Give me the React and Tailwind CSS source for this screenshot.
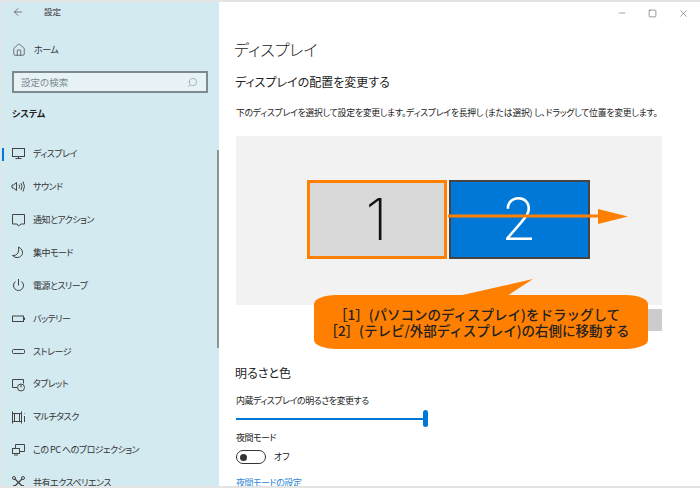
import { ArrowLeft, Home, Search, Minus, Square, X } from "lucide-react";

// small Windows style glyphs, the lucide ones are too far off
const glyph = { width: 15, height: 15, viewBox: "0 0 15 15", fill: "none", stroke: "currentColor", strokeWidth: 1 };

const DisplayIcon = () => (
  <svg {...glyph}><rect x="1.5" y="2.5" width="12" height="8" /><path d="M7.5 10.5v2M4.5 12.5h6" /></svg>
);
const SoundIcon = () => (
  <svg {...glyph}><path d="M1 6v3h1.5L5.5 11.5v-8L2.5 6zM8 5.5q1.2 2 0 4M10 4q2 3.5 0 7M12 2.5q3 5 0 10" /></svg>
);
const ActionIcon = () => (
  <svg {...glyph}><path d="M1.5 2.5h12v9.5h-3.5l-2.5 2-1.5-2h-4.5z" /></svg>
);
const MoonIcon = () => (
  <svg {...glyph}><path d="M7.5 2q5 2.500 3.800 7.500q-2.300 4-6.300 3q-2-.5-3.500-2q4 .5 5.500-2.500q1.200-3 .5-6z" /></svg>
);
const PowerIcon = () => (
  <svg {...glyph}><path d="M7.5 1v6.500M4.500 3.500a5 5 0 1 0 6 0" /></svg>
);
const BatteryIcon = () => (
  <svg {...glyph}><rect x="1.5" y="5" width="11" height="5.500" /><path d="M13.5 6.500v2.500" /></svg>
);
const StorageIcon = () => (
  <svg {...glyph}><rect x="1.5" y="5.500" width="12" height="4" rx="1" /></svg>
);
const TabletIcon = () => (
  <svg {...glyph}><path d="M6 10.500h-4.500v-8h11v4" /><circle cx="10" cy="10.500" r="3.500" /><path d="M10 7.500v3" /></svg>
);
const MultitaskIcon = () => (
  <svg {...glyph}><path d="M1.5 1.500v12M10.500 1.500v12M1.500 3.500h9M1.500 11.500h9M3.500 3.500v8M8.500 3.500v8M13.500 3v.5M13.500 6v6" /></svg>
);
const ProjectIcon = () => (
  <svg {...glyph}><path d="M4.500 6v-3.500h9v7h-5" /><rect x="1.5" y="6.500" width="7" height="5" /><path d="M3 13h4" /></svg>
);
const ShareIcon = () => (
  <svg {...glyph}><path d="M4 4l7 7M11 4l-7 7" strokeWidth="1.300" /><circle cx="3" cy="3" r="1.500" /><circle cx="12" cy="3" r="1.500" /><circle cx="3" cy="12" r="1.500" /><circle cx="12" cy="12" r="1.500" /></svg>
);

const NAV = [
  { label: "ディスプレイ", Icon: DisplayIcon, active: true },
  { label: "サウンド", Icon: SoundIcon },
  { label: "通知とアクション", Icon: ActionIcon },
  { label: "集中モード", Icon: MoonIcon },
  { label: "電源とスリープ", Icon: PowerIcon },
  { label: "バッテリー", Icon: BatteryIcon },
  { label: "ストレージ", Icon: StorageIcon },
  { label: "タブレット", Icon: TabletIcon },
  { label: "マルチタスク", Icon: MultitaskIcon },
  { label: "この PC へのプロジェクション", Icon: ProjectIcon },
  { label: "共有エクスペリエンス", Icon: ShareIcon },
];

function Sidebar() {
  return (
    <div className="relative flex w-[218px] shrink-0 flex-col overflow-hidden bg-[#d4eaf1] text-[#333]">
      <div className="flex h-[19px] shrink-0 items-center pl-[11px]">
        <ArrowLeft className="h-[12px] w-[12px]" strokeWidth={1.2} />
        <span className="ml-[20px] text-[8.5px]">設定</span>
      </div>
      <div className="mt-[18px] flex h-[22px] shrink-0 items-center pl-[11px]">
        <Home className="h-[14px] w-[14px]" strokeWidth={1.1} />
        <span className="ml-[8px] text-[9px] tracking-[-0.5px]">ホーム</span>
      </div>
      <div className="mx-[11px] mt-[10px] flex h-[22px] shrink-0 items-center justify-between border-2 border-[#7d8a8e] bg-[#e6f2f6] pr-[8px] pl-[7px] text-[9.5px] text-[#7e8b90]">
        <span>設定の検索</span>
        <Search className="h-[11px] w-[11px] -scale-x-100" strokeWidth={1.2} />
      </div>
      <div className="mt-[13px] shrink-0 pl-[11px] text-[9px] leading-[16px] font-bold text-[#222]">システム</div>
      <div className="mt-[15.5px] flex shrink-0 flex-col">
        {NAV.map(({ label, Icon, active }) => (
          <div key={label} className="relative flex h-[32.9px] shrink-0 items-center pl-[10px]">
            {active && <span className="absolute top-[10px] left-[1px] h-[13px] w-[2px] bg-[#0078d7]" />}
            <span className="text-[#444]"><Icon /></span>
            <span className="ml-[7px] text-[9px] tracking-[-0.5px] whitespace-nowrap">{label}</span>
          </div>
        ))}
      </div>
      <div className="absolute top-[148px] right-0 h-[198px] w-[2px] bg-[#8a9598]" />
    </div>
  );
}

function Callout() {
  return (
    <>
      <svg className="absolute top-0 left-0" width="700" height="488">
        <rect x="447" y="214.500" width="152" height="3" fill="#ff7f00" />
        <polygon points="597,209 627,216.500 597,224" fill="#ff7f00" />
        <polygon points="457,296 532,279 506,296" fill="#ff7f00" />
      </svg>
      <div className="absolute top-[295px] left-[313px] flex h-[54px] w-[334px] flex-col items-center justify-center rounded-[22px/9px] bg-[#ff7f00] pr-[8px] text-[13.5px] leading-[16px] font-medium whitespace-nowrap text-[#222] [font-feature-settings:normal]">
        <div>［1］(パソコンのディスプレイ)をドラッグして</div>
        <div>［2］(テレビ/外部ディスプレイ)の右側に移動する</div>
      </div>
    </>
  );
}

export default function App() {
  return (
    <div className="relative flex h-[488px] w-[700px] overflow-hidden border-t-2 border-b-2 border-l border-[#e4e4e4] bg-white font-['Noto_Sans_CJK_JP','Noto_Sans',sans-serif] [font-feature-settings:'palt']">
      <Sidebar />
      <div className="w-[481px] min-w-0 pl-[16px] text-[#222]">
        <div className="flex h-[22px] items-center justify-end gap-[21px] pr-[11px] text-[#444]">
          <Minus className="h-[10px] w-[10px]" strokeWidth={1.2} />
          <Square className="h-[9px] w-[9px]" strokeWidth={1.4} />
          <X className="h-[11px] w-[11px]" strokeWidth={1.1} />
        </div>
        <h1 className="mt-[12px] -ml-[1px] text-[16px] leading-[26px] font-light">ディスプレイ</h1>
        <h2 className="mt-[10px] text-[12px] leading-[20px]">ディスプレイの配置を変更する</h2>
        <p className="mt-[14px] ml-[1px] text-[8.8px] leading-[14px] tracking-[-0.2px] whitespace-nowrap">
          下のディスプレイを選択して設定を変更します。ディスプレイを長押し (または選択) し、ドラッグして位置を変更します。
        </p>
        <div className="mt-[16px] ml-[1px] flex h-[169px] w-[426px] items-start justify-center gap-[2px] bg-[#f2f2f2] pt-[44px] pr-[2px]">
          <div className="flex h-[79px] w-[140px] items-center justify-center border-[3px] border-[#ff7f00] bg-[#d9d9d9] font-['Inter'] text-[58px] font-extralight text-[#111]">1</div>
          <div className="flex h-[79px] w-[141px] items-center justify-center border-2 border-[#444] bg-[#0078d7] font-['Inter'] text-[58px] font-extralight text-white">2</div>
        </div>
        <div className="mt-[4px] ml-[367px] h-[22px] w-[60px] bg-[#cccccc]" />
        <h3 className="mt-[32px] text-[12px] leading-[20px]">明るさと色</h3>
        <div className="mt-[11px] ml-[1px] text-[9px] leading-[14px] tracking-[-0.5px]">内蔵ディスプレイの明るさを変更する</div>
        <div className="relative mt-[2px] ml-[1px] flex h-[17px] w-[192px] items-center">
          <div className="h-[2px] w-full bg-[#0078d7]" />
          <div className="absolute top-0 right-0 h-[17px] w-[5px] rounded-full bg-[#0078d7]" />
        </div>
        <div className="mt-[4px] ml-[1px] text-[9px] leading-[14px] tracking-[-0.5px]">夜間モード</div>
        <div className="mt-[5px] ml-[1px] flex items-center gap-[8px]">
          <div className="flex h-[14px] w-[30px] items-center rounded-full border-[1.5px] border-[#333] pl-[3px]">
            <div className="h-[7px] w-[7px] rounded-full bg-[#333]" />
          </div>
          <span className="text-[9px]">オフ</span>
        </div>
        <div className="mt-[12px] ml-[1px] text-[9px] leading-[14px] tracking-[-0.5px] text-[#2f86d6]">夜間モードの設定</div>
      </div>
      <div className="absolute -top-[2px] left-0">
        <Callout />
      </div>
    </div>
  );
}
